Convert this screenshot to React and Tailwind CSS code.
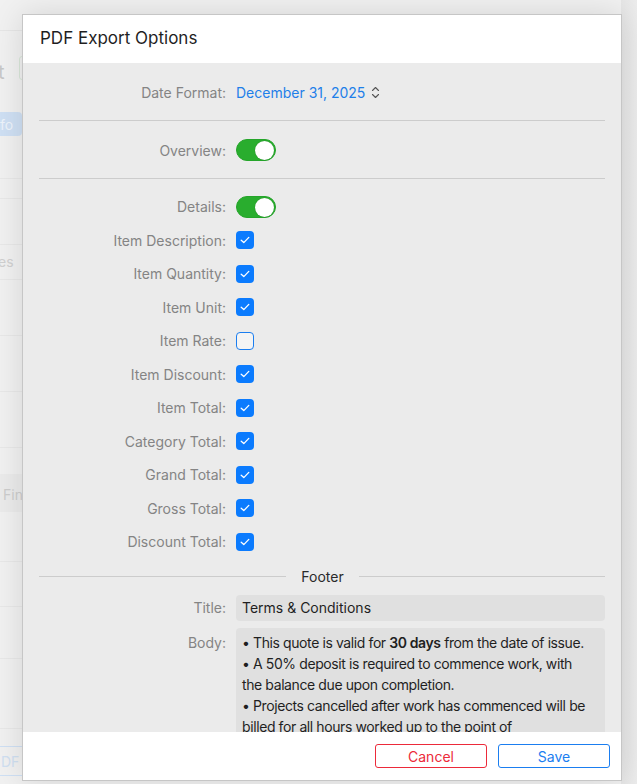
import React from "react";

const font = { fontFamily: "Inter, 'Noto Sans', 'Liberation Sans', sans-serif" };

function Toggle() {
  return (
    <div className="w-[40px] h-[22px] rounded-full bg-[#29ad2e] border border-[#25a52a] relative">
      <div className="absolute right-[1px] top-[1px] w-[19px] h-[19px] rounded-full bg-white shadow-[0_0_1px_rgba(0,0,0,0.3)]" />
    </div>
  );
}

function Check({ checked }) {
  if (!checked)
    return <div className="w-[18px] h-[18px] rounded-[4px] border border-[#1b7ef0] bg-[#f4f4f4]" />;
  return (
    <div className="w-[18px] h-[18px] rounded-[4px] bg-[#0b7bfe] flex items-center justify-center">
      <svg width="10" height="8" viewBox="0 0 10 8" fill="none">
        <path d="M1.2 4.2 L3.8 6.6 L8.8 1.4" stroke="white" strokeWidth="1.3" strokeLinecap="round" strokeLinejoin="round" />
      </svg>
    </div>
  );
}

function Row({ label, children, h = "h-[33.5px]" }) {
  return (
    <div className={`flex items-center ${h}`}>
      <div className="w-[187px] text-right text-[14px] text-[#848484] shrink-0">{label}</div>
      <div className="ml-[10px] flex items-center">{children}</div>
    </div>
  );
}

const items = [
  ["Item Description:", true],
  ["Item Quantity:", true],
  ["Item Unit:", true],
  ["Item Rate:", false],
  ["Item Discount:", true],
  ["Item Total:", true],
  ["Category Total:", true],
  ["Grand Total:", true],
  ["Gross Total:", true],
  ["Discount Total:", true],
];

export default function App() {
  return (
    <div className="relative w-[637px] h-[784px] overflow-hidden bg-[#f1f1f1]" style={font}>
      {/* faded background app */}
      <div className="absolute inset-0 flex flex-col text-[#c4c4c4] text-[16px]">
        <div className="h-[31px] border-b border-[#e6e6e6]" />
        <div className="h-[56px] relative">
          <span className="absolute left-[-2px] top-[26px] text-[20px] text-[#c8c8c8]">t</span>
          <div className="absolute left-[19px] top-[25px] w-[10px] h-[24px] border border-[#d8e6d8] rounded-[3px]" />
        </div>
        <div className="h-[92px] relative border-b border-[#e8e8e8]">
          <div className="absolute left-[-6px] top-[25px] h-[24px] w-[28px] rounded-[4px] bg-[#cfe0f4] text-[#eef4fb] text-[14px] px-[6px] flex items-center">fo</div>
        </div>
        <div className="h-[20px] border-b border-[#e8e8e8]" />
        <div className="h-[46px] border-b border-[#e8e8e8]" />
        <div className="h-[35px] border-b border-[#e8e8e8] relative">
          <span className="absolute left-[-2px] top-[6px] text-[14px] text-[#d0d0d0]">es</span>
        </div>
        <div className="h-[56px] border-b border-[#e8e8e8]" />
        <div className="h-[56px] border-b border-[#e8e8e8]" />
        <div className="h-[56px] border-b border-[#e8e8e8]" />
        <div className="h-[26px]" />
        <div className="h-[38px] bg-[#ebebeb] relative">
          <span className="absolute left-[3px] top-[10px] text-[14px] text-[#cdcdcd]">Fin</span>
        </div>
        <div className="h-[50px] border-b border-[#e8e8e8]" />
        <div className="h-[45px] border-b border-[#e8e8e8]" />
        <div className="h-[52px] border-b border-[#e8e8e8]" />
        <div className="h-[70px] border-b border-[#e8e8e8]" />
        <div className="h-[17px]" />
        <div className="h-[30px] relative">
          <div className="absolute left-[-4px] top-0 w-[36px] h-[30px] border border-[#cfe0f4] rounded-[3px] text-[14px] text-[#d0e0f2] flex items-center pl-[4px]">DF</div>
        </div>
      </div>
      <div className="absolute right-0 top-0 bottom-0 w-[16px] bg-gradient-to-l from-[#ececec] to-[#e6e6e6]" />

      {/* modal */}
      <div className="absolute left-[22px] top-[14px] w-[600px] h-[767px] border border-[#c6c6c6] bg-[#ebebeb] flex flex-col shadow-[0_0_30px_rgba(0,0,0,0.12)]">
        <div className="h-[48px] bg-white flex items-center px-[17px] shrink-0">
          <span className="text-[17px] text-[#1f1f1f]">PDF Export Options</span>
        </div>

        <div className="flex-1 overflow-hidden px-[16px] pt-[15px]">
          <Row label="Date Format:" h="h-[28px]">
            <span className="text-[14px] text-[#1e7fe9]">December 31, 2025</span>
            <svg className="ml-[6px]" width="9" height="13" viewBox="0 0 9 13" fill="none">
              <path d="M1.5 4.5 L4.5 1.5 L7.5 4.5 M1.5 8.5 L4.5 11.5 L7.5 8.5" stroke="#555" strokeWidth="1.1" strokeLinecap="round" strokeLinejoin="round" />
            </svg>
          </Row>
          <div className="mt-[14px] h-[1px] bg-[#cccccc]" />
          <div className="mt-[15px]">
            <Row label="Overview:" h="h-[28px]">
              <Toggle />
            </Row>
          </div>
          <div className="mt-[14px] h-[1px] bg-[#cccccc]" />
          <div className="mt-[11px]">
            <Row label="Details:">
              <Toggle />
            </Row>
            {items.map(([l, c]) => (
              <Row key={l} label={l}>
                <Check checked={c} />
              </Row>
            ))}
          </div>

          <div className="mt-[8px] h-[19px] flex items-center">
            <div className="w-[247px] h-[1px] bg-[#cccccc]" />
            <span className="flex-1 text-center text-[14px] text-[#2a2a2a]">Footer</span>
            <div className="w-[246px] h-[1px] bg-[#cccccc]" />
          </div>

          <div className="mt-[9px] flex items-center">
            <div className="w-[187px] text-right text-[14px] text-[#848484] shrink-0">Title:</div>
            <div className="ml-[10px] flex-1 h-[26px] rounded-[4px] bg-[#e0e0e0] flex items-center px-[6px] text-[14px] text-[#1f1f1f]">
              Terms &amp; Conditions
            </div>
          </div>

          <div className="mt-[7px] flex items-start">
            <div className="w-[187px] text-right text-[14px] text-[#848484] shrink-0 pt-[4px] leading-[21px]">Body:</div>
            <div className="ml-[10px] flex-1 h-[140px] rounded-[4px] bg-[#e0e0e0] pl-[6px] pr-[2px] pt-[4px] text-[14px] leading-[21px] tracking-[-0.4px] text-[#1f1f1f]">
              <div>• This quote is valid for <b className="font-semibold">30 days</b> from the date of issue.</div>
              <div>• A 50% deposit is required to commence work, with<br />the balance due upon completion.</div>
              <div>• Projects cancelled after work has commenced will be<br />billed for all hours worked up to the point of<br />cancellation.</div>
            </div>
          </div>
        </div>

        <div className="h-[48px] bg-white shrink-0 flex items-center justify-end gap-[11px] pr-[11px]">
          <button className="w-[112px] h-[24px] rounded-[3px] border border-[#ec2a3a] text-[#ec2a3a] text-[14px] bg-white">Cancel</button>
          <button className="w-[112px] h-[24px] rounded-[3px] border border-[#1b7ef0] text-[#1b7ef0] text-[14px] bg-white">Save</button>
        </div>
      </div>
    </div>
  );
}
